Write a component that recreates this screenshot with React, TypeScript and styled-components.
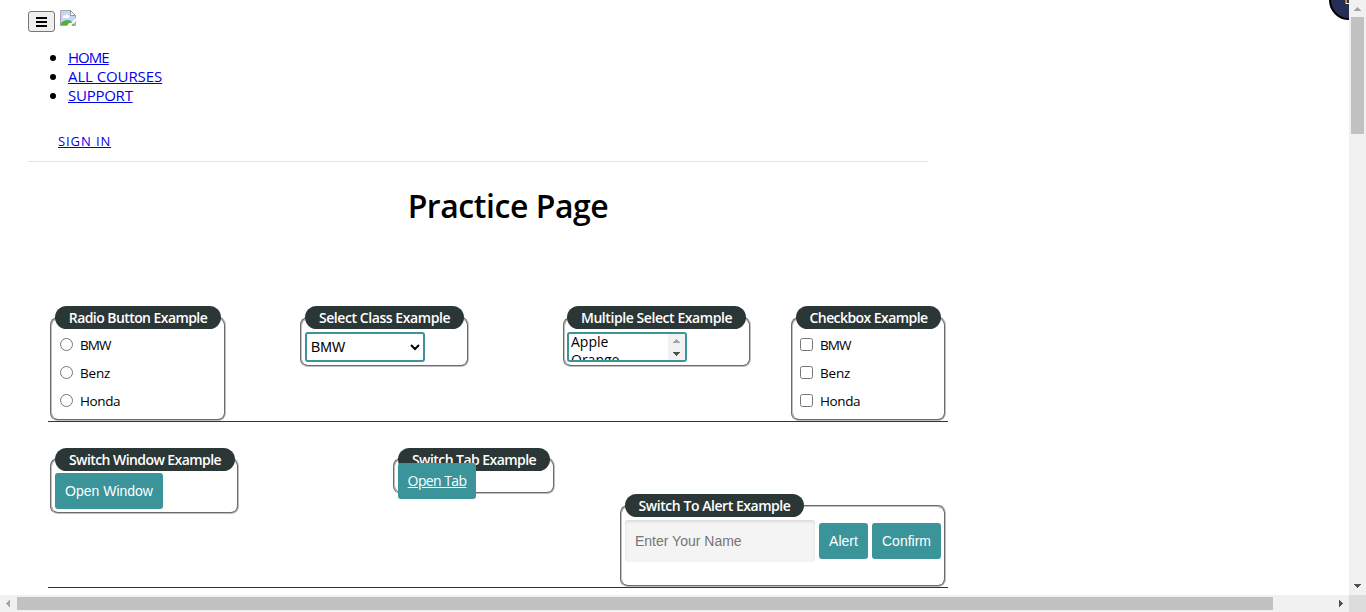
import React from "react";
import styled, { createGlobalStyle } from "styled-components";

const humanist = `"Trebuchet MS", "Open Sans", "Noto Sans", sans-serif`;
const arial = `"Liberation Sans", Arial, sans-serif`;
const teal = "#3a9499";
const dark = "#2b3737";

const GlobalStyle = createGlobalStyle`
  * { box-sizing: border-box; }
  body { margin: 0; background: #fff; overflow: hidden; color: #000; font-family: ${humanist}; }
`;

const Shell = styled.div`
  display: grid;
  grid-template-columns: 1fr 17px;
  grid-template-rows: 595px 17px;
  width: 100%;
  height: 612px;
`;

const Viewport = styled.main`
  position: relative;
  overflow: hidden;
`;

const Header = styled.header`
  width: 900px;
  height: 162px;
  margin-left: 28px;
  padding-top: 10px;
  border-bottom: 1px solid #e3e3e3;
`;

const TopRow = styled.div`
  display: flex;
  gap: 5px;
  height: 38px;
`;

const MenuButton = styled.button`
  display: flex;
  align-items: center;
  justify-content: center;
  width: 27px;
  height: 21px;
  margin-top: 1px;
  padding: 0;
  border: 1px solid #767676;
  border-radius: 3px;
  background: #efefef;
`;

const Nav = styled.ul`
  margin: 0;
  padding-left: 40px;
  list-style: disc;
  font-size: 16px;
  line-height: 19px;
`;

const Track = styled.span<{ $spacing?: number }>`
  letter-spacing: ${(p) => p.$spacing ?? 0}px;
`;

const Link = styled.a<{ $spacing?: number }>`
  color: #0000ee;
  font-size: 15px;
  letter-spacing: ${(p) => p.$spacing ?? 0}px;
  text-decoration: underline;
`;

const SignIn = styled(Link)`
  display: block;
  width: max-content;
  margin: 27px 0 0 30px;
  font-size: 13px;
  line-height: 18px;
`;

const Title = styled.h1`
  width: 900px;
  height: 144px;
  margin: 0 0 0 58px;
  padding-top: 22px;
  font-size: 32px;
  font-weight: 600;
  line-height: 43px;
  letter-spacing: -0.45px;
  text-align: center;
`;

const Row = styled.section<{ $height: number }>`
  display: flex;
  align-items: flex-start;
  width: 900px;
  height: ${(p) => p.$height}px;
  margin-left: 48px;
  padding-left: 2px;
  border-bottom: 1px solid ${dark};
`;

const Card = styled.div<{
  $width: number;
  $height: number;
  $left?: number;
  $top?: number;
  $inset?: number;
}>`
  flex: none;
  width: ${(p) => p.$width}px;
  height: ${(p) => p.$height}px;
  margin: ${(p) => p.$top ?? 11}px 0 0 ${(p) => p.$left ?? 0}px;
  padding: 0 3px 0 ${(p) => p.$inset ?? 3}px;
  border: 2px groove #c0c0c0;
  border-radius: 8px;
`;

const Legend = styled.div<{ $width: number; $spacing: number; $raise?: number }>`
  width: ${(p) => p.$width}px;
  height: 23px;
  margin-top: -${(p) => p.$raise ?? 13}px;
  border-radius: 12px;
  background: ${dark};
  color: #fff;
  font-size: 14px;
  font-weight: 600;
  line-height: 23px;
  letter-spacing: ${(p) => p.$spacing}px;
  text-align: center;
  white-space: nowrap;
`;

const Options = styled.div<{ $indent: number }>`
  padding: 3px 0 0 ${(p) => p.$indent}px;
`;

const Option = styled.label`
  display: flex;
  align-items: center;
  height: 28px;
  padding-bottom: 2px;
  font-size: 13.5px;
  input { width: 13px; height: 13px; margin: 0 7px 1px 0; }
`;

const Select = styled.select`
  display: block;
  width: 120px;
  height: 30px;
  margin-top: 3px;
  padding: 0 2px 0 0;
  border: 2px solid ${teal};
  border-radius: 3px;
  background: #fff;
  color: #000;
  font-family: ${arial};
  font-size: 14px;
`;

const ListBox = styled.div`
  display: flex;
  justify-content: space-between;
  width: 120px;
  height: 30px;
  margin-top: 3px;
  overflow: hidden;
  border: 2px solid ${teal};
  border-radius: 3px;
  font-size: 14px;
  line-height: 18px;
`;

const ListItems = styled.div`
  padding-left: 2px;
  margin-top: -1px;
`;

const ListScroll = styled.div`
  display: flex;
  flex-direction: column;
  align-items: center;
  justify-content: space-between;
  width: 17px;
  padding: 5px 0 4px;
  background: #f1f1f1;
`;

const Button = styled.button<{ $width: number }>`
  display: block;
  width: ${(p) => p.$width}px;
  height: 36px;
  padding: 0;
  border: 0;
  border-radius: 3px;
  background: ${teal};
  color: #fff;
  font-family: ${arial};
  font-size: 14px;
`;

const WindowButton = styled(Button)`
  margin-top: 2px;
`;

const TabLink = styled.a`
  position: relative;
  display: block;
  width: 78px;
  height: 36px;
  margin-top: -8px;
  border-radius: 3px;
  background: ${teal};
  color: #fff;
  font-size: 14px;
  line-height: 36px;
  letter-spacing: -0.6px;
  text-align: center;
  text-decoration: underline;
`;

const AlertForm = styled.div`
  display: flex;
  align-items: center;
  gap: 4px;
  margin-top: 3px;
`;

const NameInput = styled.input`
  width: 190px;
  height: 42px;
  padding: 0 10px;
  border: 0;
  border-radius: 3px;
  background: #f4f4f4;
  box-shadow: inset 0 2px 3px rgba(0, 0, 0, 0.1);
  font-family: ${arial};
  font-size: 14px;
  &::placeholder { color: #757575; }
`;

const Badge = styled.div`
  position: absolute;
  top: -20px;
  right: -20px;
  width: 40px;
  height: 40px;
  border: 2px solid #000;
  border-radius: 50%;
  background: #252e54;
`;

const BadgeMark = styled.svg`
  display: block;
  margin: 14px 0 0 14px;
`;

const VerticalBar = styled.div`
  display: flex;
  flex-direction: column;
  align-items: center;
  justify-content: space-between;
  padding: 7px 0;
  background: #f1f1f1;
`;

const VerticalThumb = styled.div`
  width: 13px;
  height: 117px;
  margin: 6px 0 auto;
  background: #c1c1c1;
`;

const HorizontalBar = styled.div`
  display: flex;
  align-items: center;
  justify-content: space-between;
  padding: 0 6px;
  background: #f1f1f1;
`;

const HorizontalThumb = styled.div`
  width: 1256px;
  height: 13px;
  margin: 0 auto 0 7px;
  background: #c1c1c1;
`;

const Corner = styled.div`
  background: #dcdcdc;
`;

const paths = {
  up: "M3 0h1v1h1v1h1v1h1v1H0V3h1V2h1V1h1z",
  down: "M0 0h7v1H6v1H5v1H4v1H3V3H2V2H1V1H0z",
  left: "M0 3h1V2h1V1h1V0h1v7H3V6H2V5H1V4H0z",
  right: "M0 0h1v1h1v1h1v1h1v1H3v1H2v1H1v1H0z",
};

function Arrow({ dir, color = "#505050" }: { dir: keyof typeof paths; color?: string }) {
  const vertical = dir === "up" || dir === "down";
  return (
    <svg width={vertical ? 7 : 4} height={vertical ? 4 : 7} shapeRendering="crispEdges">
      <path d={paths[dir]} fill={color} />
    </svg>
  );
}

function MissingImage() {
  return (
    <svg width="16" height="16" viewBox="0 0 16 16">
      <path d="M.5.5h10l5 5v10H.5z" fill="#c3d6f7" />
      <path d="M3 7c0-2 2-2 2.4-1C6 3 9 4 8.5 6c1.5 0 1.5 2 0 2H3.7C2.8 8 2.6 7.4 3 7z" fill="#fff" />
      <path d="M1 15v-2c3-3 7-4 10-2l4 4z" fill="#54ad3c" />
      <path d="M.5.5h10l5 5v10H.5z" fill="none" stroke="#a7a7a7" />
      <path d="M10.5.5v5h5z" fill="#f7f7f7" stroke="#999" />
      <path d="M7 16l2-3h2l5-5v3l-3.5 3-1 2z" fill="#fff" />
    </svg>
  );
}

function Choices({ type }: { type: "radio" | "checkbox" }) {
  return (
    <Options $indent={type === "radio" ? 5 : 4}>
      {["BMW", "Benz", "Honda"].map((name) => (
        <Option key={name}>
          <input type={type} name={type} />
          <Track $spacing={name === "BMW" ? -0.9 : name === "Benz" ? -0.2 : -0.4}>{name}</Track>
        </Option>
      ))}
    </Options>
  );
}

export default function App() {
  return (
    <>
      <GlobalStyle />
      <Shell>
        <Viewport>
          <Header>
            <TopRow>
              <MenuButton aria-label="Menu">
                <svg width="11" height="10" shapeRendering="crispEdges">
                  <path d="M0 0h11v2H0zM0 4h11v2H0zM0 8h11v2H0z" />
                </svg>
              </MenuButton>
              <MissingImage />
            </TopRow>
            <Nav>
              <li><Link $spacing={-0.95}>HOME</Link></li>
              <li><Link $spacing={-0.1}>ALL COURSES</Link></li>
              <li><Link $spacing={-0.25}>SUPPORT</Link></li>
            </Nav>
            <SignIn $spacing={0.9}>SIGN IN</SignIn>
          </Header>
          <Title>Practice Page</Title>
          <Row $height={116}>
            <Card $width={176} $height={104}>
              <Legend $width={166} $spacing={-0.57}>Radio Button Example</Legend>
              <Choices type="radio" />
            </Card>
            <Card $width={169} $height={50} $left={74}>
              <Legend $width={159} $spacing={-0.43}>Select Class Example</Legend>
              <Select defaultValue="BMW"><option>BMW</option></Select>
            </Card>
            <Card $width={188} $height={50} $left={94} $inset={2}>
              <Legend $width={179} $spacing={-0.43}>Multiple Select Example</Legend>
              <ListBox>
                <ListItems><div>Apple</div><div>Orange</div></ListItems>
                <ListScroll><Arrow dir="up" color="#a3a3a3" /><Arrow dir="down" /></ListScroll>
              </ListBox>
            </Card>
            <Card $width={155} $height={104} $left={40}>
              <Legend $width={145} $spacing={-0.57}>Checkbox Example</Legend>
              <Choices type="checkbox" />
            </Card>
          </Row>
          <Row $height={166}>
            <Card $width={189} $height={56} $top={36}>
              <Legend $width={180} $spacing={-0.57} $raise={12}>Switch Window Example</Legend>
              <WindowButton $width={108}>Open Window</WindowButton>
            </Card>
            <Card $width={162} $height={36} $top={36} $left={154}>
              <Legend $width={152} $spacing={-0.55} $raise={12}>Switch Tab Example</Legend>
              <TabLink>Open Tab</TabLink>
            </Card>
            <Card $width={326} $height={82} $top={83} $left={65}>
              <Legend $width={179} $spacing={-0.45}>Switch To Alert Example</Legend>
              <AlertForm>
                <NameInput placeholder="Enter Your Name" />
                <Button $width={49}>Alert</Button>
                <Button $width={69}>Confirm</Button>
              </AlertForm>
            </Card>
          </Row>
          <Badge>
            <BadgeMark width="10" height="9" shapeRendering="crispEdges">
              <path d="M1 0h9v8H1z" fill="#2b3737" />
              <path d="M0 0h1v8H0z" fill="#35a3c8" />
              <path d="M1 0h1v8H1z" fill="#e08a3c" />
              <path d="M1 7h9v1H1z" fill="#fff" />
            </BadgeMark>
          </Badge>
        </Viewport>
        <VerticalBar>
          <Arrow dir="up" color="#a3a3a3" />
          <VerticalThumb />
          <Arrow dir="down" />
        </VerticalBar>
        <HorizontalBar>
          <Arrow dir="left" color="#a3a3a3" />
          <HorizontalThumb />
          <Arrow dir="right" />
        </HorizontalBar>
        <Corner />
      </Shell>
    </>
  );
}
